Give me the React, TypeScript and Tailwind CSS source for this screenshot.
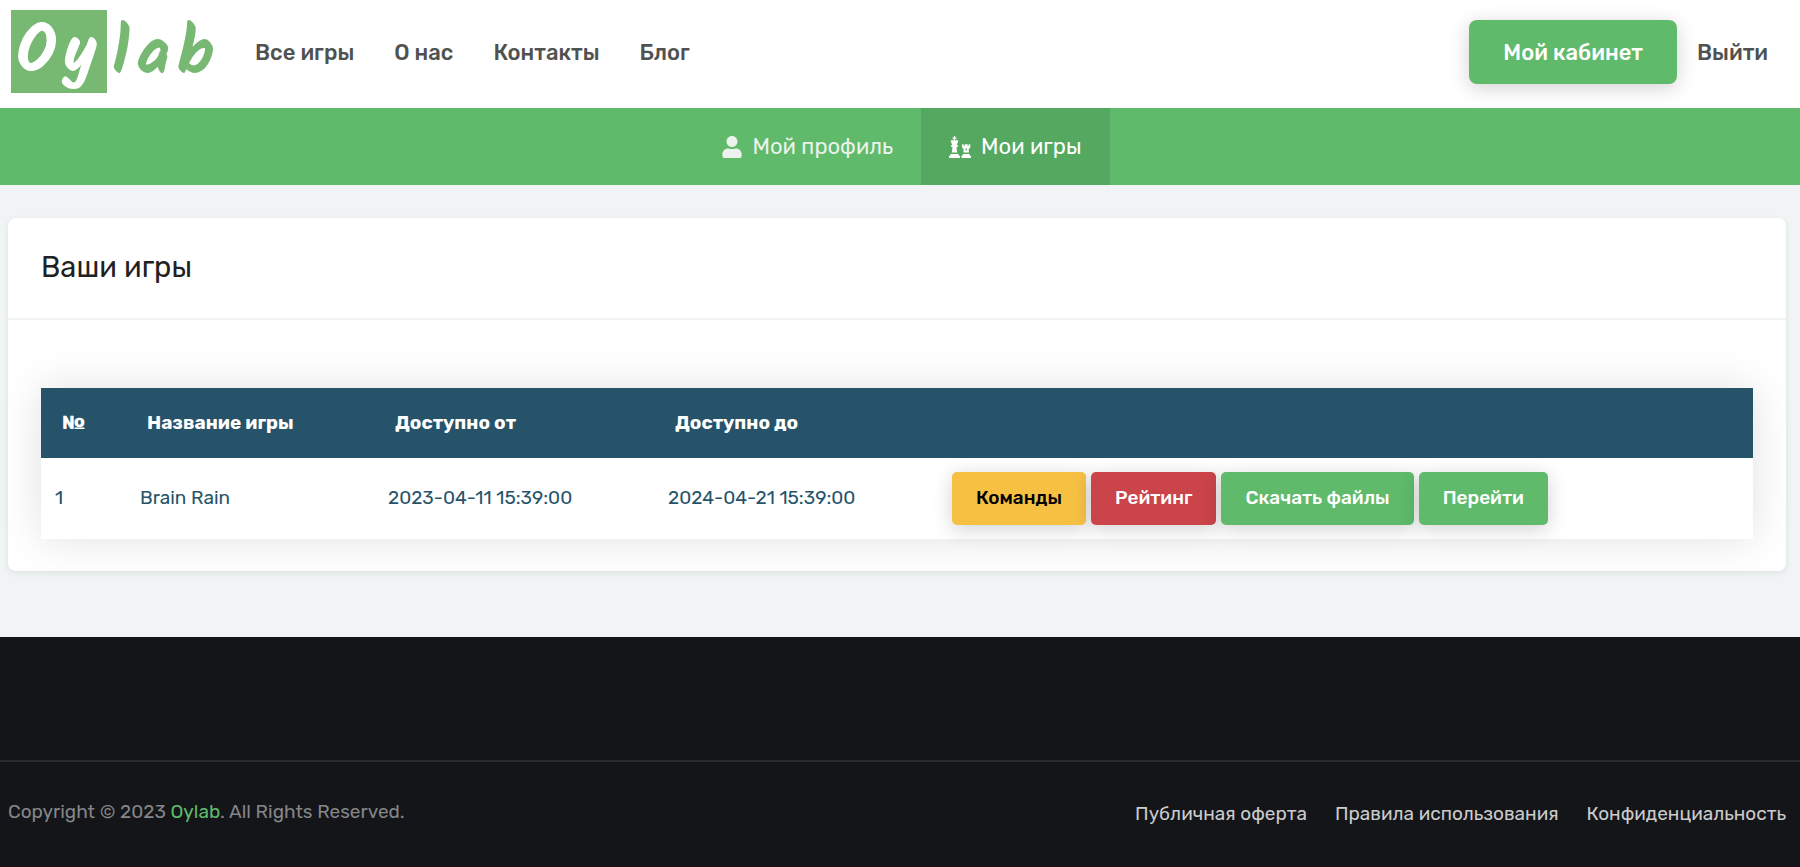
import React from 'react';
import { FaChess, FaUser } from 'react-icons/fa';

interface Game {
  id: number;
  name: string;
  from: string;
  to: string;
}

const games: Game[] = [
  { id: 1, name: 'Brain Rain', from: '2023-04-11 15:39:00', to: '2024-04-21 15:39:00' },
];

const menu = ['Все игры', 'О нас', 'Контакты', 'Блог'];

const legal = ['Публичная оферта', 'Правила использования', 'Конфиденциальность'];

const Logo: React.FC = () => (
  <svg
    width="204"
    height="104"
    viewBox="0 0 204 104"
    role="img"
    aria-label="Oylab"
    className="overflow-visible font-['Kalam','Caveat_Brush','Lato',sans-serif] font-bold"
  >
    <rect y="10" width="96" height="83" fill="#77b873" />
    <text x="5" y="72" dx="0 6" fontSize="66" fill="#fff">
      Oy
    </text>
    <text x="101" y="74" dx="0 7 7" fontSize="66" fill="#77b873">
      lab
    </text>
  </svg>
);

const Header: React.FC = () => (
  <header className="flex h-[108px] items-center bg-white pb-1 pl-[11px] pr-8 text-[22px] font-medium text-[#505251]">
    <a href="#" className="mr-5">
      <Logo />
    </a>
    <nav className="flex flex-1">
      {menu.map((item) => (
        <a key={item} href="#" className="px-5">
          {item}
        </a>
      ))}
    </nav>
    <a
      href="#"
      className="mr-5 flex h-16 items-center rounded-lg bg-[#5fba6b] px-[34px] text-white shadow-[0_4px_20px_rgba(0,0,0,0.18)]"
    >
      Мой кабинет
    </a>
    <a href="#">Выйти</a>
  </header>
);

const Tabs: React.FC = () => (
  <nav className="flex h-[77px] justify-center bg-[#5fba6b] pl-1 text-[22px] text-white">
    <a href="#" className="flex items-center gap-2.5 px-7 text-[#ebf3ec]">
      <FaUser className="h-[22px] w-5" />
      Мой профиль
    </a>
    <a href="#" className="flex items-center gap-2.5 bg-[#55a85f] px-7">
      <FaChess className="size-[22px]" />
      Мои игры
    </a>
  </nav>
);

const GamesTable: React.FC = () => (
  <table className="w-full table-fixed bg-white text-left text-[19px] text-[#265369] shadow-[0_0_40px_rgba(0,0,0,0.12)]">
    <colgroup>
      <col className="w-[85px]" />
      <col className="w-[248px]" />
      <col className="w-[280px]" />
      <col className="w-[284px]" />
      <col />
    </colgroup>
    <thead>
      <tr className="h-[70px] bg-[#265369] text-white">
        <th className="px-[21px] font-bold">№</th>
        <th className="px-[21px] font-bold">Название игры</th>
        <th className="px-[21px] font-bold">Доступно от</th>
        <th className="px-[21px] font-bold">Доступно до</th>
        <th aria-label="Действия" />
      </tr>
    </thead>
    <tbody>
      {games.map((game) => (
        <tr key={game.id} className="h-[81px]">
          <td className="px-3.5">{game.id}</td>
          <td className="px-3.5">{game.name}</td>
          <td className="px-3.5">{game.from}</td>
          <td className="px-3.5">{game.to}</td>
          <td className="px-3.5">
            <div className="flex gap-[5px] font-medium text-white">
              <button className="h-[53px] rounded-[5px] bg-[#f6c143] px-6 text-black shadow-[0_4px_20px_rgba(0,0,0,0.18)]">
                Команды
              </button>
              <button className="h-[53px] rounded-[5px] bg-[#ca444a] px-6 shadow-[0_4px_20px_rgba(0,0,0,0.18)]">
                Рейтинг
              </button>
              <button className="h-[53px] rounded-[5px] bg-[#5fba6b] px-6 shadow-[0_4px_20px_rgba(0,0,0,0.18)]">
                Скачать файлы
              </button>
              <button className="h-[53px] rounded-[5px] bg-[#5fba6b] px-6 shadow-[0_4px_20px_rgba(0,0,0,0.18)]">
                Перейти
              </button>
            </div>
          </td>
        </tr>
      ))}
    </tbody>
  </table>
);

const Footer: React.FC = () => (
  <footer className="flex flex-1 flex-col bg-[#141519] pt-[123px]">
    <div className="flex h-[106px] items-center justify-between border-t-2 border-[#2b2c30] pl-2 pr-3.5 text-[19px]">
      <p className="pb-1 text-[#858688]">
        Copyright © 2023{' '}
        <a href="#" className="text-[#5fba6b]">
          Oylab
        </a>
        . All Rights Reserved.
      </p>
      <div className="flex gap-7 text-[#cbcbcc]">
        {legal.map((item) => (
          <a key={item} href="#">
            {item}
          </a>
        ))}
      </div>
    </div>
  </footer>
);

export default function App() {
  return (
    <div className="flex min-h-screen flex-col bg-[#f0f4f5] font-['Rubik','Roboto',sans-serif]">
      <Header />
      <Tabs />
      <main className="pb-[66px] pl-2 pr-3.5 pt-[33px]">
        <section className="rounded-lg bg-white shadow-[0_2px_6px_rgba(0,0,0,0.08)]">
          {/* En-tête de la carte */}
          <div className="flex h-[102px] items-center border-b-2 border-[#f1f2f2] px-[33px]">
            <h1 className="text-[29px] text-[#212121]">Ваши игры</h1>
          </div>
          <div className="px-[33px] pb-8 pt-[68px]">
            <GamesTable />
          </div>
        </section>
      </main>
      <Footer />
    </div>
  );
}
